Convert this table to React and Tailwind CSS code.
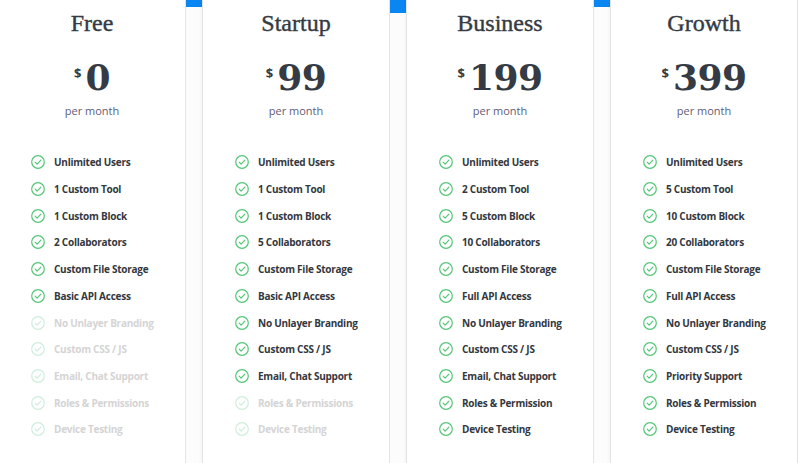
import React from "react";

const plans = [
  {
    name: "Free",
    price: "0",
    features: [
      ["Unlimited Users", true],
      ["1 Custom Tool", true],
      ["1 Custom Block", true],
      ["2 Collaborators", true],
      ["Custom File Storage", true],
      ["Basic API Access", true],
      ["No Unlayer Branding", false],
      ["Custom CSS / JS", false],
      ["Email, Chat Support", false],
      ["Roles & Permissions", false],
      ["Device Testing", false],
    ],
  },
  {
    name: "Startup",
    price: "99",
    features: [
      ["Unlimited Users", true],
      ["1 Custom Tool", true],
      ["1 Custom Block", true],
      ["5 Collaborators", true],
      ["Custom File Storage", true],
      ["Basic API Access", true],
      ["No Unlayer Branding", true],
      ["Custom CSS / JS", true],
      ["Email, Chat Support", true],
      ["Roles & Permissions", false],
      ["Device Testing", false],
    ],
  },
  {
    name: "Business",
    price: "199",
    features: [
      ["Unlimited Users", true],
      ["2 Custom Tool", true],
      ["5 Custom Block", true],
      ["10 Collaborators", true],
      ["Custom File Storage", true],
      ["Full API Access", true],
      ["No Unlayer Branding", true],
      ["Custom CSS / JS", true],
      ["Email, Chat Support", true],
      ["Roles & Permission", true],
      ["Device Testing", true],
    ],
  },
  {
    name: "Growth",
    price: "399",
    features: [
      ["Unlimited Users", true],
      ["5 Custom Tool", true],
      ["10 Custom Block", true],
      ["20 Collaborators", true],
      ["Custom File Storage", true],
      ["Full API Access", true],
      ["No Unlayer Branding", true],
      ["Custom CSS / JS", true],
      ["Priority Support", true],
      ["Roles & Permission", true],
      ["Device Testing", true],
    ],
  },
];

function Check({ on }) {
  return (
    <svg
      width="14"
      height="14"
      viewBox="0 0 14 14"
      fill="none"
      className={on ? "shrink-0 text-[#55c677]" : "shrink-0 text-[#cfeeda]"}
    >
      <circle cx="7" cy="7" r="6.3" stroke="currentColor" strokeWidth="1.2" />
      <path
        d="M4.2 7.2 L6.1 9.1 L9.9 5.2"
        stroke="currentColor"
        strokeWidth="1.2"
        strokeLinecap="round"
        strokeLinejoin="round"
      />
    </svg>
  );
}

function Card({ plan, first }) {
  return (
    <div
      className={
        "flex h-full w-[188px] shrink-0 flex-col border-x border-[#e3e3e3] bg-white shadow-[0_0_4px_rgba(0,0,0,0.06)] " +
        (first ? "-ml-[2px]" : "")
      }
    >
      <div className="pt-[11px] text-center font-['Liberation_Serif',serif] text-[24px] leading-[24px] text-[#353b44] [-webkit-text-stroke:0.4px_#353b44]">
        {plan.name}
      </div>
      <div className="mt-[23.5px] flex justify-center text-[#353b44]">
        <span className="mr-[4px] mt-[8px] font-['Open_Sans',sans-serif] text-[13px] font-bold leading-[13px]">
          $
        </span>
        <span className="font-['DejaVu_Serif',serif] text-[36px] font-bold leading-[36px] tracking-[-0.5px]">
          {plan.price}
        </span>
      </div>
      <div className="mt-[8.7px] text-center font-['Open_Sans',sans-serif] text-[11px] leading-[15px] text-[#5f5d77]">
        per month
      </div>
      <ul className="mt-[30.9px] flex flex-col pl-[32px]">
        {plan.features.map(([label, on]) => (
          <li key={label} className="flex h-[26.7px] items-center gap-[9px]">
            <Check on={on} />
            <span
              className={
                "font-['Open_Sans',sans-serif] text-[10px] font-bold leading-[14px] tracking-[-0.25px] " +
                (on ? "text-[#333840]" : "text-[#d4d4d4]")
              }
            >
              {label}
            </span>
          </li>
        ))}
      </ul>
    </div>
  );
}

function Gap({ tall }) {
  return (
    <div className="flex h-full w-[16px] shrink-0 flex-col bg-[#fcfcfc]">
      <div className={"w-full bg-[#0a86f2] " + (tall ? "h-[13px]" : "h-[7px]")} />
    </div>
  );
}

export default function App() {
  return (
    <div className="flex h-[463px] w-[803px] overflow-hidden bg-white">
      <Card plan={plans[0]} first />
      <Gap />
      <Card plan={plans[1]} />
      <Gap tall />
      <Card plan={plans[2]} />
      <Gap />
      <Card plan={plans[3]} />
      <div className="h-full flex-1 bg-white" />
    </div>
  );
}
